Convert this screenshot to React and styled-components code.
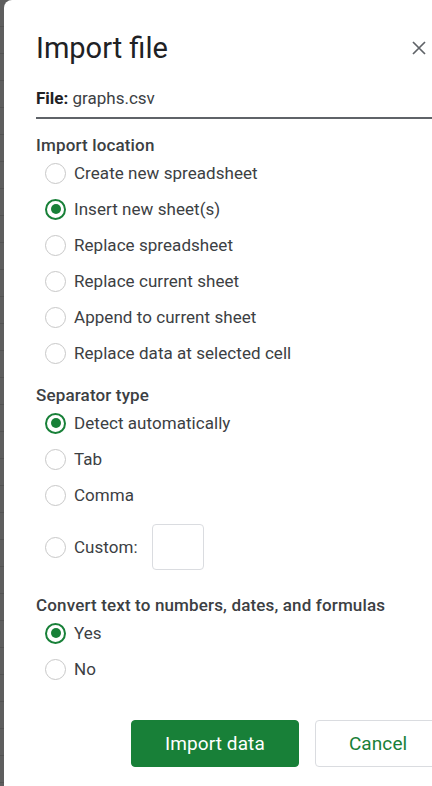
import React, { useState } from "react";
import styled, { createGlobalStyle } from "styled-components";

const GlobalStyle = createGlobalStyle`
  html, body {
    margin: 0;
    padding: 0;
    width: 432px;
    height: 786px;
    overflow: hidden;
    background-color: #5e5e5e;
    background-image: repeating-linear-gradient(
      to bottom,
      transparent 0px,
      transparent 26px,
      #535353 26px,
      #535353 27px
    );
    font-family: Roboto, "Liberation Sans", Arial, sans-serif;
  }
`;

const Page = styled.div`
  display: flex;
  height: 786px;
  padding-left: 4px;
`;

const Dialog = styled.div`
  flex: 1;
  min-width: 0;
  background: #ffffff;
  border-top-left-radius: 8px;
  padding-left: 32px;
  box-sizing: border-box;
`;

const Header = styled.div`
  display: flex;
  align-items: center;
  justify-content: space-between;
  padding-top: 30px;
`;

const Title = styled.h1`
  margin: 0;
  font-size: 29px;
  line-height: 36px;
  font-weight: 400;
  color: #202124;
`;

const CloseButton = styled.button`
  display: flex;
  align-items: center;
  justify-content: center;
  width: 24px;
  height: 24px;
  padding: 0;
  margin-right: 1px;
  border: none;
  background: none;
  color: #5f6368;
`;

const FileRow = styled.div`
  margin-top: 22px;
  padding-bottom: 9px;
  border-bottom: 2px solid #5f6368;
  font-size: 17px;
  line-height: 20px;
  color: #3c4043;
`;

const FileLabel = styled.b`
  font-weight: 700;
  color: #202124;
`;

const Section = styled.div`
  margin-top: ${(p) => p.$top}px;
`;

const Heading = styled.div`
  font-size: 17px;
  line-height: 20px;
  font-weight: 500;
  letter-spacing: 0.15px;
  color: #3c4043;
`;

const List = styled.div`
  display: flex;
  flex-direction: column;
  padding-left: 9px;
`;

const Row = styled.label`
  display: flex;
  align-items: center;
  gap: 8px;
  height: ${(p) => p.$h || 36}px;
  font-size: 17px;
  letter-spacing: 0.05px;
  color: #3c4043;
`;

const Circle = styled.span`
  box-sizing: border-box;
  width: 21px;
  height: 21px;
  border-radius: 50%;
  border: ${(p) => (p.$on ? "2.5px solid #188038" : "1px solid #c8c8c8")};
  display: flex;
  align-items: center;
  justify-content: center;
  &::after {
    content: "";
    display: ${(p) => (p.$on ? "block" : "none")};
    width: 10px;
    height: 10px;
    border-radius: 50%;
    background: #188038;
  }
`;

const CustomInput = styled.span`
  box-sizing: border-box;
  width: 52px;
  height: 46px;
  margin-left: 6px;
  border: 1px solid #dadce0;
  border-radius: 4px;
`;

const Footer = styled.div`
  display: flex;
  gap: 16px;
  margin-top: 33px;
  padding-left: 95px;
`;

const Button = styled.button`
  flex-shrink: 0;
  box-sizing: border-box;
  height: 47px;
  padding: 0 33px;
  border-radius: 4px;
  font-family: Roboto, "Liberation Sans", Arial, sans-serif;
  font-size: 19px;
  letter-spacing: 0.1px;
  font-weight: 400;
  border: 1px solid ${(p) => (p.$primary ? "#188038" : "#dadce0")};
  background: ${(p) => (p.$primary ? "#188038" : "#ffffff")};
  color: ${(p) => (p.$primary ? "#ffffff" : "#188038")};
`;

function Radio({ on, label, children, h }) {
  return (
    <Row $h={h}>
      <Circle $on={on} />
      {label}
      {children}
    </Row>
  );
}

export default function App() {
  const [location] = useState("Insert new sheet(s)");
  const [separator] = useState("Detect automatically");
  const [convert] = useState("Yes");

  const locations = [
    "Create new spreadsheet",
    "Insert new sheet(s)",
    "Replace spreadsheet",
    "Replace current sheet",
    "Append to current sheet",
    "Replace data at selected cell",
  ];

  return (
    <>
      <GlobalStyle />
      <Page>
        <Dialog>
          <Header>
            <Title>Import file</Title>
            <CloseButton aria-label="Close">
              <svg width="16" height="16" viewBox="0 0 16 16">
                <path
                  d="M2 2 L14 14 M14 2 L2 14"
                  stroke="currentColor"
                  strokeWidth="1.7"
                  fill="none"
                />
              </svg>
            </CloseButton>
          </Header>
          <FileRow>
            <FileLabel>File:</FileLabel> graphs.csv
          </FileRow>

          <Section $top={16}>
            <Heading>Import location</Heading>
            <List>
              {locations.map((l) => (
                <Radio key={l} label={l} on={l === location} />
              ))}
            </List>
          </Section>

          <Section $top={14}>
            <Heading>Separator type</Heading>
            <List>
              {["Detect automatically", "Tab", "Comma"].map((s) => (
                <Radio key={s} label={s} on={s === separator} />
              ))}
              <Radio label="Custom:" h={68}>
                <CustomInput />
              </Radio>
            </List>
          </Section>

          <Section $top={14}>
            <Heading>Convert text to numbers, dates, and formulas</Heading>
            <List>
              {["Yes", "No"].map((c) => (
                <Radio key={c} label={c} on={c === convert} />
              ))}
            </List>
          </Section>

          <Footer>
            <Button $primary>Import data</Button>
            <Button>Cancel</Button>
          </Footer>
        </Dialog>
      </Page>
    </>
  );
}
